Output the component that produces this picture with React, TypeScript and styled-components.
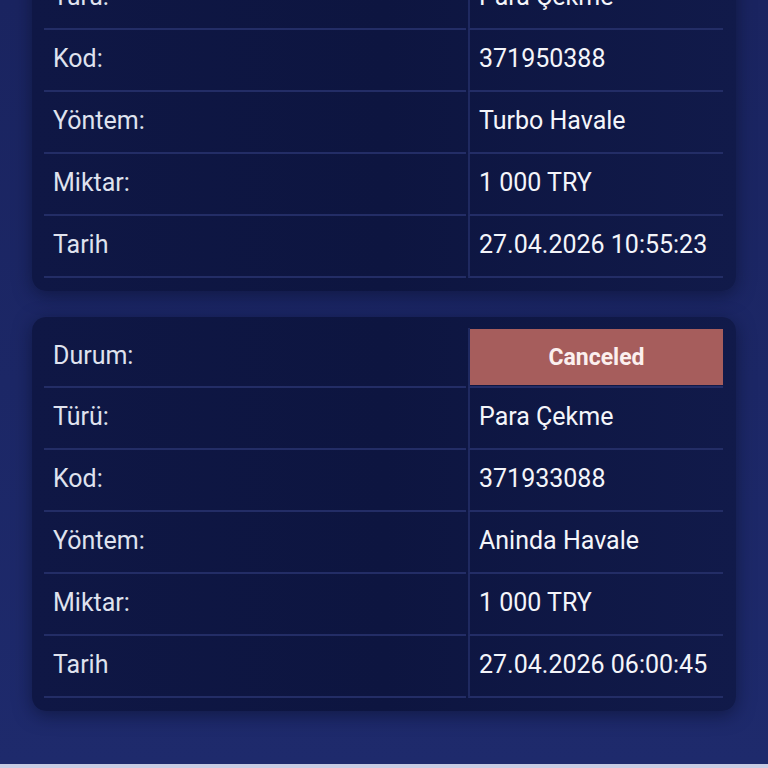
import React, { FC } from "react";
import styled, { createGlobalStyle } from "styled-components";

const GlobalStyle = createGlobalStyle`
  html, body {
    margin: 0;
    padding: 0;
    background: #1d2868;
    overflow: hidden;
  }
  body {
    font-family: Roboto, "Liberation Sans", sans-serif;
  }
`;

const Page = styled.div`
  height: 768px;
  box-sizing: border-box;
  display: flex;
  flex-direction: column;
  background: linear-gradient(180deg, #1a2460 0%, #1e2a6c 100%);
  border-bottom: 4px solid #c9cde3;
  overflow: hidden;
`;

const List = styled.div`
  display: flex;
  flex-direction: column;
  gap: 26px;
  padding: 0 32px;
  margin-top: -103px;
`;

const Card = styled.div`
  background: linear-gradient(90deg, #0f1745 0%, #0d1540 50%, #111a4a 100%);
  border-radius: 14px;
  padding: 11px 13px 13px 12px;
  box-shadow: 0 4px 18px rgba(8, 12, 40, 0.55);
`;

const Row = styled.div<{ $height?: number }>`
  display: grid;
  grid-template-columns: 422px 1fr;
  column-gap: 2px;
  height: ${({ $height }) => $height ?? 62}px;
`;

const Cell = styled.div<{ $value?: boolean }>`
  display: flex;
  align-items: center;
  padding-left: 9px;
  padding-bottom: 3px;
  font-size: 25px;
  color: ${({ $value }) => ($value ? "#f4f5fa" : "#dfe2ee")};
  border-bottom: 2px solid #232d66;
  border-left: ${({ $value }) => ($value ? "2px solid #1f2960" : "none")};
  box-sizing: border-box;
  min-width: 0;
  white-space: nowrap;
`;

const BadgeCell = styled.div`
  display: flex;
  flex-direction: column;
  border-left: 2px solid #1f2960;
  border-bottom: 2px solid #232d66;
  padding: 1px 0 1px 0;
`;

const Badge = styled.div`
  flex: 1;
  display: flex;
  align-items: center;
  justify-content: center;
  background: #a65d5c;
  color: #fbefee;
  font-weight: 700;
  font-size: 23px;
`;

type Entry = {
  status: string;
  type: string;
  code: string;
  method: string;
  amount: string;
  date: string;
};

const entries: Entry[] = [
  {
    status: "Canceled",
    type: "Para Çekme",
    code: "371950388",
    method: "Turbo Havale",
    amount: "1 000 TRY",
    date: "27.04.2026 10:55:23",
  },
  {
    status: "Canceled",
    type: "Para Çekme",
    code: "371933088",
    method: "Aninda Havale",
    amount: "1 000 TRY",
    date: "27.04.2026 06:00:45",
  },
];

const TxCard: FC<{ entry: Entry }> = ({ entry }) => {
  const rows: [string, string][] = [
    ["Türü:", entry.type],
    ["Kod:", entry.code],
    ["Yöntem:", entry.method],
    ["Miktar:", entry.amount],
    ["Tarih", entry.date],
  ];

  return (
    <Card>
      <Row $height={60}>
        <Cell>Durum:</Cell>
        <BadgeCell>
          <Badge>{entry.status}</Badge>
        </BadgeCell>
      </Row>
      {rows.map(([label, value]) => (
        <Row key={label}>
          <Cell>{label}</Cell>
          <Cell $value>{value}</Cell>
        </Row>
      ))}
    </Card>
  );
};

const App: FC = () => (
  <>
    <GlobalStyle />
    <Page>
      <List>
        {entries.map((e) => (
          <TxCard key={e.code} entry={e} />
        ))}
      </List>
    </Page>
  </>
);

export default App;
